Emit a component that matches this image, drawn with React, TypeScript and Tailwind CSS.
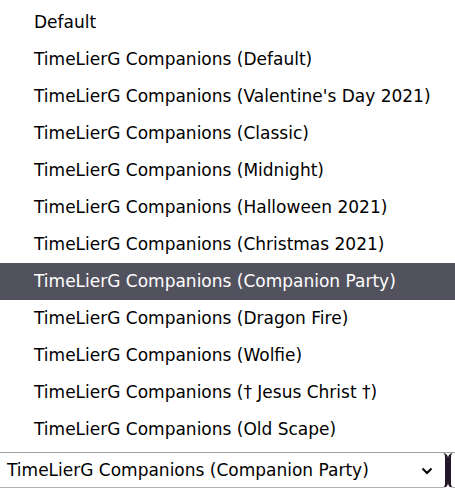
import React from "react";

const items = [
  "Default",
  "TimeLierG Companions (Default)",
  "TimeLierG Companions (Valentine's Day 2021)",
  "TimeLierG Companions (Classic)",
  "TimeLierG Companions (Midnight)",
  "TimeLierG Companions (Halloween 2021)",
  "TimeLierG Companions (Christmas 2021)",
  "TimeLierG Companions (Companion Party)",
  "TimeLierG Companions (Dragon Fire)",
  "TimeLierG Companions (Wolfie)",
  "TimeLierG Companions († Jesus Christ †)",
  "TimeLierG Companions (Old Scape)",
];

export default function App() {
  return (
    <div
      className="w-[455px] h-[490px] bg-white overflow-hidden flex flex-col"
      style={{ fontFamily: "Tahoma, 'DejaVu Sans', sans-serif" }}
    >
      <div className="flex flex-col pt-[4px] h-[452px] shrink-0">
        {items.map((t, i) => (
          <div
            key={i}
            className={
              "h-[37px] shrink-0 flex items-center pl-[34px] text-[17px] whitespace-nowrap " +
              (i === 7 ? "bg-[#52525e] text-white" : "text-black")
            }
          >
            {t}
          </div>
        ))}
      </div>
      <div className="flex h-[36px] shrink-0 border-t border-[#a0a0a0]">
        <div className="flex-1 flex items-center justify-between pl-[7px] pr-[12px] pt-[2px] bg-white border-b border-[#b0b0b0] border-r-[3px] border-r-[#24182a] rounded-br-[5px] rounded-tr-[5px] text-[17px] text-black whitespace-nowrap">
          <span>TimeLierG Companions (Companion Party)</span>
          <svg width="12" height="8" viewBox="0 0 12 8" fill="none">
            <path d="M1.5 1.5 L6 6 L10.5 1.5" stroke="#000" strokeWidth="2" />
          </svg>
        </div>
        <div className="w-[7px] bg-white border-l-[3px] border-l-[#24182a] rounded-bl-[5px] rounded-tl-[5px] border-b border-[#b0b0b0]" />
      </div>
    </div>
  );
}
